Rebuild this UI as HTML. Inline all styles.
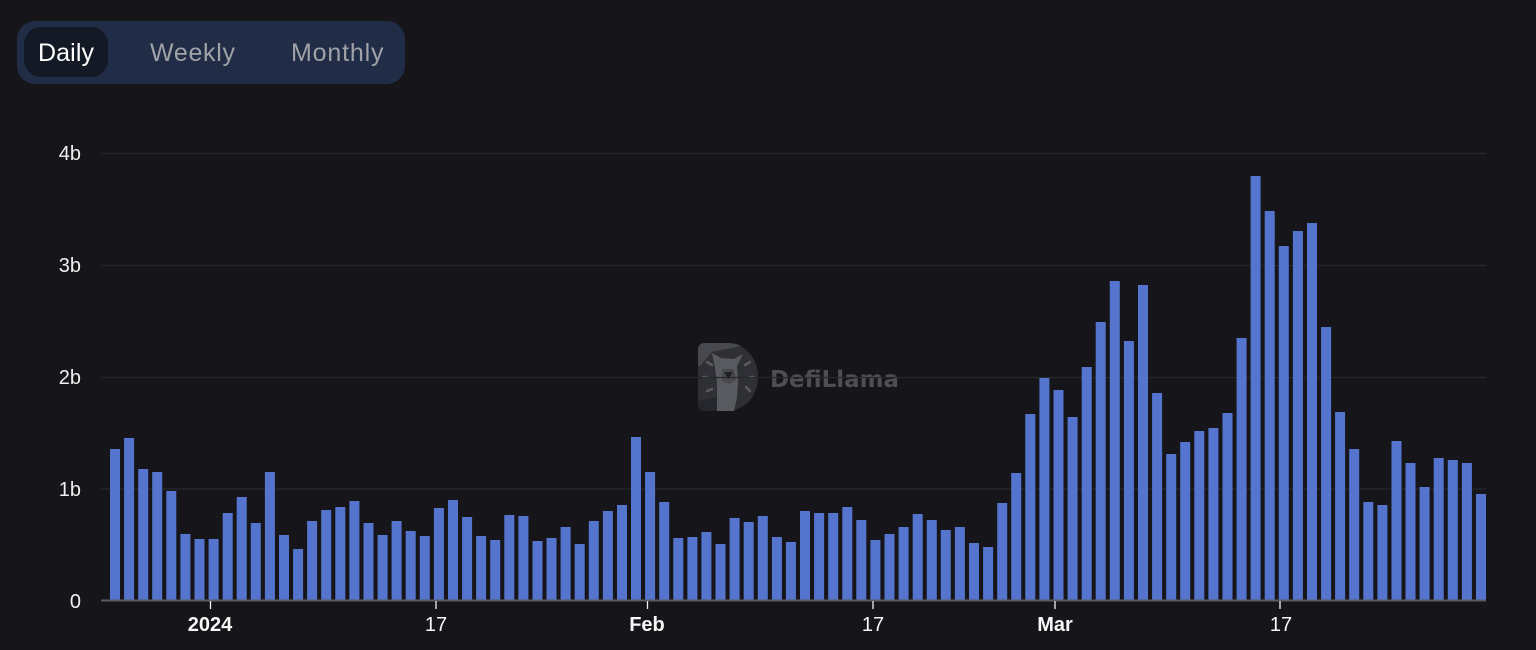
<!DOCTYPE html>
<html lang="en">
<head>
<meta charset="utf-8">
<title>DefiLlama Volume Chart</title>
<style>
html,body{margin:0;padding:0;width:1536px;height:650px;overflow:hidden;background:#16161a}
svg{display:block;position:absolute;left:0;top:0}
text{font-family:"Liberation Sans",Arial,sans-serif}
</style>
</head>
<body>
<svg width="1536" height="650" viewBox="0 0 1536 650" xmlns="http://www.w3.org/2000/svg">
  <rect width="1536" height="650" fill="#16161a"/>

  <!-- Tabs -->
  <rect x="17" y="21" width="388" height="63" rx="18" fill="#212c46"/>
  <rect x="24" y="27" width="84" height="50" rx="17" fill="#141a25"/>
  <g font-size="25">
    <text x="38" y="61" fill="#ffffff" textLength="56" lengthAdjust="spacing">Daily</text>
    <text x="150" y="61" fill="#a0a2a8" textLength="85" lengthAdjust="spacing">Weekly</text>
    <text x="291" y="61" fill="#a0a2a8" textLength="92.5" lengthAdjust="spacing">Monthly</text>
  </g>

  <!-- Watermark -->
  <path d="M705 343H726C745 343 758 358 758 377C758 396 745 411 726 411H705Q698 411 698 404V350Q698 343 705 343Z" fill="#2f3035"/>
  <path d="M705 343H728C733 343 737 344 741 346L712 352L700 366H698V350Q698 343 705 343Z" fill="#48494e"/>
  <path d="M698 401L717 397V411H705Q698 411 698 404Z" fill="#26272c"/>
  <path d="M712 353L721 358L734 359L743 354L737 366L738 382L737 398L734 411H717L717 382L715 368Z" fill="#595a5f"/>
  <path d="M722 369H734L736 380L729 384L722 381Z" fill="#47484d"/>
  <path d="M724 372H733L728.5 379Z" fill="#1f2024"/>
  <path d="M707 362L712 365M750 362L745 365M703 377H707M750 377H754M707 391L712 389M750 391L746 387" stroke="#595a5f" stroke-width="2.5" stroke-linecap="round" fill="none"/>
  <text x="770" y="387" font-size="23" font-weight="700" fill="#4e4f54" style="font-family:'DejaVu Sans',sans-serif" textLength="129" lengthAdjust="spacingAndGlyphs">DefiLlama</text>

  <!-- Grid -->
  <path d="M101 153.5H1486M101 265.5H1486M101 377.5H1486M101 489H1486" stroke="#27282c" stroke-width="1.2" fill="none"/>

  <!-- Bars -->
  <path fill="none" stroke="#5574cd" stroke-width="10" d="M115 600V449M129.1 600V438M143.2 600V469M157.2 600V472M171.3 600V491M185.4 600V534M199.5 600V539M213.6 600V539M227.7 600V513M241.7 600V497M255.8 600V523M269.9 600V472M284 600V535M298.1 600V549M312.1 600V521M326.2 600V510M340.3 600V507M354.4 600V501M368.5 600V523M382.6 600V535M396.6 600V521M410.7 600V531M424.8 600V536M438.9 600V508M453 600V500M467.1 600V517M481.1 600V536M495.2 600V540M509.3 600V515M523.4 600V516M537.5 600V541M551.5 600V538M565.6 600V527M579.7 600V544M593.8 600V521M607.9 600V511M622 600V505M636 600V437M650.1 600V472M664.2 600V502M678.3 600V538M692.4 600V537M706.4 600V532M720.5 600V544M734.6 600V518M748.7 600V522M762.8 600V516M776.9 600V537M790.9 600V542M805 600V511M819.1 600V513M833.2 600V513M847.3 600V507M861.3 600V520M875.4 600V540M889.5 600V534M903.6 600V527M917.7 600V514M931.8 600V520M945.8 600V530M959.9 600V527M974 600V543M988.1 600V547M1002.2 600V503M1016.2 600V473M1030.3 600V414M1044.4 600V378M1058.5 600V390M1072.6 600V417M1086.7 600V367M1100.7 600V322M1114.8 600V281M1128.9 600V341M1143 600V285M1157.1 600V393M1171.2 600V454M1185.2 600V442M1199.3 600V431M1213.4 600V428M1227.5 600V413M1241.6 600V338M1255.6 600V176M1269.7 600V211M1283.8 600V246M1297.9 600V231M1312 600V223M1326.1 600V327M1340.1 600V412M1354.2 600V449M1368.3 600V502M1382.4 600V505M1396.5 600V441M1410.5 600V463M1424.6 600V487M1438.7 600V458M1452.8 600V460M1466.9 600V463M1481 600V494"/>

  <!-- Axis -->
  <path d="M101 600.5H1486" stroke="#5b5c61" stroke-width="2"/>
  <path d="M210.5 601V609M436 601V609M647.5 601V609M873 601V609M1055 601V609M1280 601V609" stroke="#f0f0f0" stroke-width="1.3" fill="none"/>

  <!-- Y labels -->
  <g font-size="20" fill="#f0f0f0" text-anchor="end">
    <text x="81" y="160">4b</text>
    <text x="81" y="272">3b</text>
    <text x="81" y="384">2b</text>
    <text x="81" y="496">1b</text>
    <text x="81" y="608">0</text>
  </g>

  <!-- X labels -->
  <g font-size="20" fill="#f7f7f7" text-anchor="middle">
    <text x="210" y="631" font-weight="700">2024</text>
    <text x="436" y="631">17</text>
    <text x="647" y="631" font-weight="700">Feb</text>
    <text x="873" y="631">17</text>
    <text x="1055" y="631" font-weight="700">Mar</text>
    <text x="1281" y="631">17</text>
  </g>
</svg>
</body>
</html>
